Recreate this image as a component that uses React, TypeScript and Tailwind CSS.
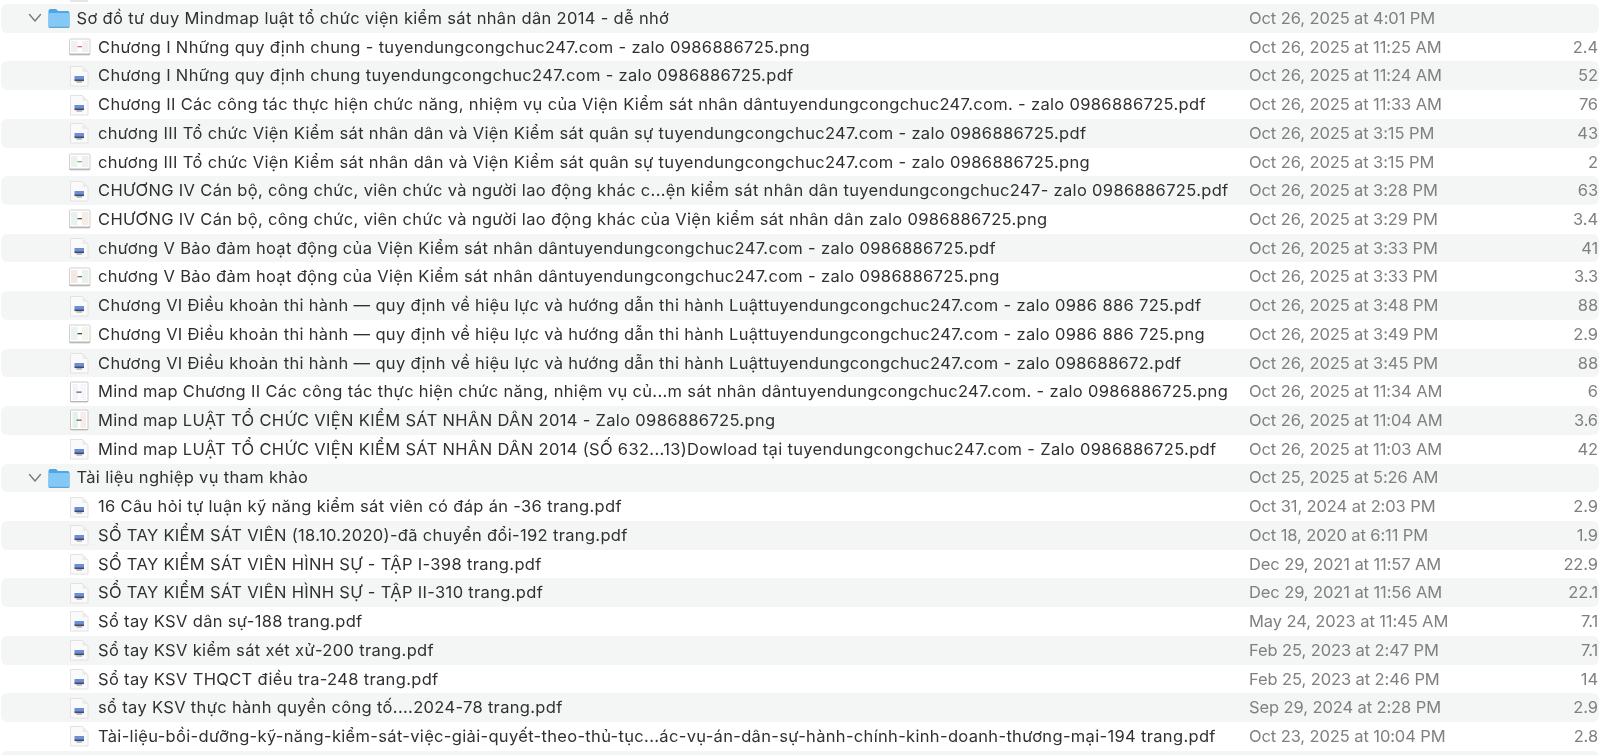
import React from "react";

type Kind = "folder" | "pdf" | "wide" | "mid" | "tall";
type Row = { n: string; d: string; s?: string; k: Kind; c?: string[] };

const rows: Row[] = [
  { k: "folder", n: "Sơ đồ tư duy Mindmap luật tổ chức viện kiểm sát nhân dân 2014 - dễ nhớ", d: "Oct 26, 2025 at 4:01 PM" },
  { k: "wide", c: ["#f0f0f2", "#f0f0f2", "#e07070"], n: "Chương I Những quy định chung - tuyendungcongchuc247.com - zalo 0986886725.png", d: "Oct 26, 2025 at 11:25 AM", s: "2.4" },
  { k: "pdf", n: "Chương I Những quy định chung tuyendungcongchuc247.com - zalo 0986886725.pdf", d: "Oct 26, 2025 at 11:24 AM", s: "52" },
  { k: "pdf", n: "Chương II Các công tác thực hiện chức năng, nhiệm vụ của Viện Kiểm sát nhân dântuyendungcongchuc247.com. - zalo 0986886725.pdf", d: "Oct 26, 2025 at 11:33 AM", s: "76" },
  { k: "pdf", n: "chương III Tổ chức Viện Kiểm sát nhân dân và Viện Kiểm sát quân sự tuyendungcongchuc247.com - zalo 0986886725.pdf", d: "Oct 26, 2025 at 3:15 PM", s: "43" },
  { k: "wide", c: ["#eef0ee", "#f0eeee", "#70c070"], n: "chương III Tổ chức Viện Kiểm sát nhân dân và Viện Kiểm sát quân sự tuyendungcongchuc247.com - zalo 0986886725.png", d: "Oct 26, 2025 at 3:15 PM", s: "2" },
  { k: "pdf", n: "CHƯƠNG IV Cán bộ, công chức, viên chức và người lao động khác c...ện kiểm sát nhân dân tuyendungcongchuc247- zalo 0986886725.pdf", d: "Oct 26, 2025 at 3:28 PM", s: "63" },
  { k: "mid", c: ["#e8f2ec", "#f6ece6", "#555555"], n: "CHƯƠNG IV Cán bộ, công chức, viên chức và người lao động khác của Viện kiểm sát nhân dân zalo 0986886725.png", d: "Oct 26, 2025 at 3:29 PM", s: "3.4" },
  { k: "pdf", n: "chương V Bảo đảm hoạt động của Viện Kiểm sát nhân dântuyendungcongchuc247.com - zalo 0986886725.pdf", d: "Oct 26, 2025 at 3:33 PM", s: "41" },
  { k: "mid", c: ["#f5e8e2", "#e8f2ea", "#777777"], n: "chương V Bảo đảm hoạt động của Viện Kiểm sát nhân dântuyendungcongchuc247.com - zalo 0986886725.png", d: "Oct 26, 2025 at 3:33 PM", s: "3.3" },
  { k: "pdf", n: "Chương VI Điều khoản thi hành — quy định về hiệu lực và hướng dẫn thi hành Luậttuyendungcongchuc247.com - zalo 0986 886 725.pdf", d: "Oct 26, 2025 at 3:48 PM", s: "88" },
  { k: "mid", c: ["#e8f4ec", "#f6f3ea", "#444444"], n: "Chương VI Điều khoản thi hành — quy định về hiệu lực và hướng dẫn thi hành Luậttuyendungcongchuc247.com - zalo 0986 886 725.png", d: "Oct 26, 2025 at 3:49 PM", s: "2.9" },
  { k: "pdf", n: "Chương VI Điều khoản thi hành — quy định về hiệu lực và hướng dẫn thi hành Luậttuyendungcongchuc247.com - zalo 098688672.pdf", d: "Oct 26, 2025 at 3:45 PM", s: "88" },
  { k: "tall", c: ["#f4f3f9", "#f6f6fa", "#666666"], n: "Mind map Chương II Các công tác thực hiện chức năng, nhiệm vụ củ...m sát nhân dântuyendungcongchuc247.com. - zalo 0986886725.png", d: "Oct 26, 2025 at 11:34 AM", s: "6" },
  { k: "tall", c: ["#e2f2e8", "#f6ecec", "#666666"], n: "Mind map LUẬT TỔ CHỨC VIỆN KIỂM SÁT NHÂN DÂN 2014 - Zalo 0986886725.png", d: "Oct 26, 2025 at 11:04 AM", s: "3.6" },
  { k: "pdf", n: "Mind map LUẬT TỔ CHỨC VIỆN KIỂM SÁT NHÂN DÂN 2014 (SỐ 632...13)Dowload tại tuyendungcongchuc247.com - Zalo 0986886725.pdf", d: "Oct 26, 2025 at 11:03 AM", s: "42" },
  { k: "folder", n: "Tài liệu nghiệp vụ tham khảo", d: "Oct 25, 2025 at 5:26 AM" },
  { k: "pdf", n: "16 Câu hỏi tự luận kỹ năng kiểm sát viên có đáp án -36 trang.pdf", d: "Oct 31, 2024 at 2:03 PM", s: "2.9" },
  { k: "pdf", n: "SỔ TAY KIỂM SÁT VIÊN (18.10.2020)-đã chuyển đổi-192 trang.pdf", d: "Oct 18, 2020 at 6:11 PM", s: "1.9" },
  { k: "pdf", n: "SỔ TAY KIỂM SÁT VIÊN HÌNH SỰ - TẬP I-398 trang.pdf", d: "Dec 29, 2021 at 11:57 AM", s: "22.9" },
  { k: "pdf", n: "SỔ TAY KIỂM SÁT VIÊN HÌNH SỰ - TẬP II-310 trang.pdf", d: "Dec 29, 2021 at 11:56 AM", s: "22.1" },
  { k: "pdf", n: "Sổ tay KSV dân sự-188 trang.pdf", d: "May 24, 2023 at 11:45 AM", s: "7.1" },
  { k: "pdf", n: "Sổ tay KSV kiểm sát xét xử-200 trang.pdf", d: "Feb 25, 2023 at 2:47 PM", s: "7.1" },
  { k: "pdf", n: "Sổ tay KSV THQCT điều tra-248 trang.pdf", d: "Feb 25, 2023 at 2:46 PM", s: "14" },
  { k: "pdf", n: "sổ tay KSV thực hành quyền công tố....2024-78 trang.pdf", d: "Sep 29, 2024 at 2:28 PM", s: "2.9" },
  { k: "pdf", n: "Tài-liệu-bồi-dưỡng-kỹ-năng-kiểm-sát-việc-giải-quyết-theo-thủ-tục...ác-vụ-án-dân-sự-hành-chính-kinh-doanh-thương-mại-194 trang.pdf", d: "Oct 23, 2025 at 10:04 PM", s: "2.8" },
];

function Icon({ k, c }: { k: Kind; c?: string[] }) {
  if (k === "folder")
    return (
      <svg width="22" height="22" viewBox="0 0 22 22">
        <path d="M0.5 4a2 2 0 0 1 2-2h5.5l2 2h9.5a2 2 0 0 1 2 2v13a2 2 0 0 1-2 2h-17a2 2 0 0 1-2-2z" fill="#4ea6e2" />
        <path d="M0.5 7.5a1.5 1.5 0 0 1 1.5-1.5h18a1.5 1.5 0 0 1 1.5 1.5v11.5a2 2 0 0 1-2 2h-17a2 2 0 0 1-2-2z" fill="#84c8f5" />
        <path d="M0.5 19.8h21v.2a1.5 1.5 0 0 1-1.5 1h-18a1.5 1.5 0 0 1-1.5-1z" fill="#5fa4d6" />
      </svg>
    );
  if (k === "pdf")
    return (
      <svg width="22" height="22" viewBox="0 0 22 22">
        <path d="M1.5 1.5h12l5.5 5.5v14h-17.5z" fill="#fafafa" stroke="#e2e2e2" />
        <path d="M13.5 1.5v5.5h5.5z" fill="#ececec" />
        <rect x="5.5" y="11" width="9.5" height="4" fill="#6b8fd8" />
        <rect x="5.5" y="14.5" width="9.5" height="1.6" fill="#454b58" />
        <rect x="7.5" y="16.1" width="5.5" height="1.6" fill="#a9aeb8" />
      </svg>
    );
  const [a, b, m] = c ?? ["#eee", "#eee", "#666"];
  if (k === "tall")
    return (
      <svg width="22" height="22" viewBox="0 0 22 22">
        <rect x="1.5" y="1" width="17.5" height="20" rx="1" fill="#ffffff" stroke="#c9c9c9" />
        <rect x="3.5" y="3" width="5.5" height="16" fill={a} />
        <rect x="11.5" y="3" width="5.5" height="16" fill={b} />
        <rect x="7.5" y="10.5" width="5" height="1.3" fill={m} />
        <rect x="1.5" y="20" width="17.5" height="1" fill="#b5b5b5" />
      </svg>
    );
  const top = k === "wide" ? 3 : 2;
  const h = k === "wide" ? 16 : 18;
  return (
    <svg width="22" height="22" viewBox="0 0 22 22">
      <rect x="0.5" y={top} width="20.5" height={h} rx="1" fill="#ffffff" stroke="#d0d0d0" />
      <rect x="2" y={top + 2} width="6.5" height={h - 5} fill={a} />
      <rect x="13" y={top + 2} width="6.5" height={h - 5} fill={b} />
      <rect x="8.5" y={top + h / 2 - 1} width="4.5" height="1.3" fill={m} />
      <rect x="0.5" y={top + h - 1.5} width="20.5" height="1.5" fill="#b8b8b8" />
    </svg>
  );
}

export default function App() {
  return (
    <div className="h-[755px] w-[1600px] overflow-hidden bg-white font-['Inter','Noto_Sans',sans-serif] blur-[0.35px]">
      <div className="flex h-[4px] items-start pl-[70px]">
        <div className="h-[1.5px] w-[18px] bg-[#e6e6e6]" />
      </div>
      {[...rows, null].map((r, i) => {
        if (!r) return <div key={i} className="mx-[1px] h-[28.72px] rounded-[6px] bg-[#f4f5f5]" />;
        const folder = r.k === "folder";
        return (
          <div
            key={i}
            className={`mx-[1px] flex h-[28.72px] items-center rounded-[6px] ${i % 2 === 0 ? "bg-[#f4f5f5]" : "bg-white"}`}
          >
            <div className={`flex w-[1248px] min-w-0 shrink-0 items-center ${folder ? "pl-[27px]" : "pl-[67.5px]"}`}>
              {folder && (
                <svg className="mr-[5.5px] shrink-0" width="14" height="14" viewBox="0 0 14 14" fill="none">
                  <path d="M1.5 3.5 7 10 12.5 3.5" stroke="#7a7a7a" strokeWidth="1.4" strokeLinecap="round" strokeLinejoin="round" />
                </svg>
              )}
              <span className="shrink-0"><Icon k={r.k} c={r.c} /></span>
              <span className={`whitespace-nowrap text-[16.5px] tracking-[0.33px] text-[#303030] ${folder ? "ml-[7px]" : "ml-[7.5px]"}`}>{r.n}</span>
            </div>
            <span className="w-[290px] shrink-0 whitespace-nowrap text-[16.5px] tracking-[-0.1px] text-[#808080]">{r.d}</span>
            <span className="w-[59px] shrink-0 whitespace-nowrap text-right text-[16.5px] tracking-[-0.1px] text-[#808080]">{r.s}</span>
          </div>
        );
      })}
    </div>
  );
}
